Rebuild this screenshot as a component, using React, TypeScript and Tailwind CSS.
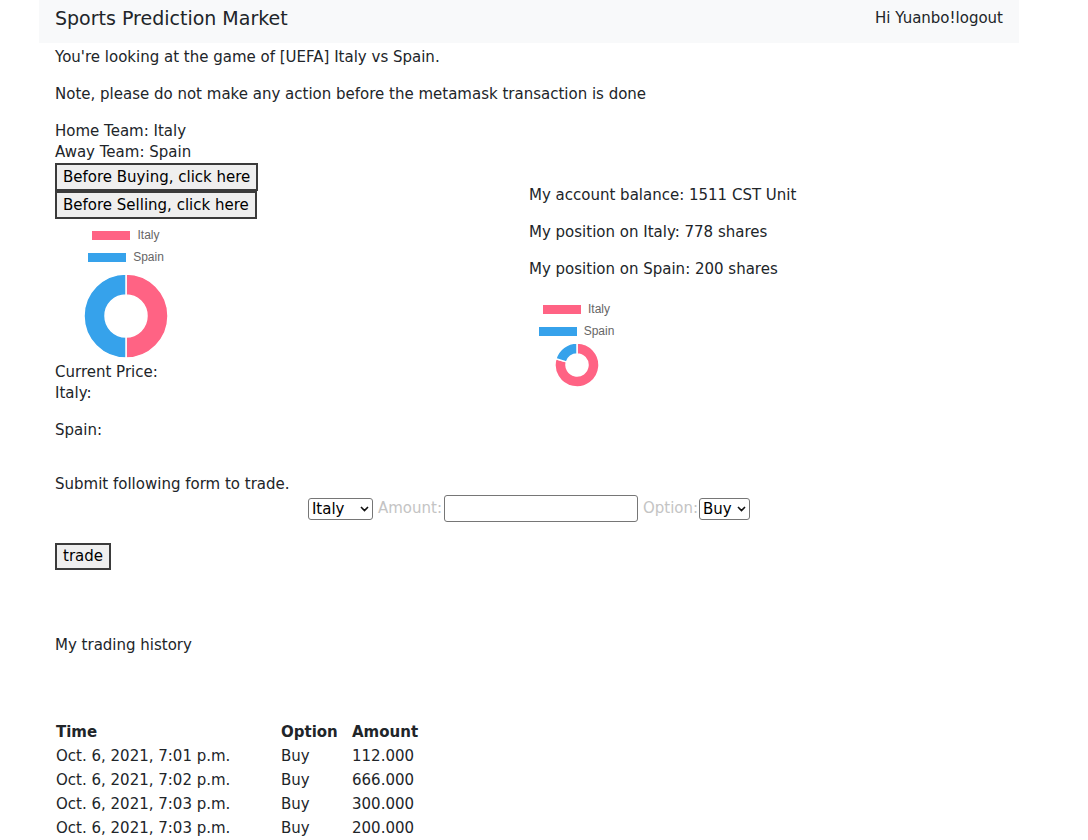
import React from 'react';

const PINK = '#ff6384';
const BLUE = '#36a2eb';

type Slice = { label: string; value: number; color: string };

function arcPath(cx: number, cy: number, R: number, r: number, a0: number, a1: number) {
    const large = a1 - a0 > Math.PI ? 1 : 0;
    const pt = (rad: number, a: number) => `${cx + rad * Math.cos(a)} ${cy + rad * Math.sin(a)}`;
    return `M ${pt(R, a0)} A ${R} ${R} 0 ${large} 1 ${pt(R, a1)} L ${pt(r, a1)} A ${r} ${r} 0 ${large} 0 ${pt(r, a0)} Z`;
}

const Donut: React.FC<{ slices: Slice[]; outer: number }> = ({ slices, outer }) => {
    const size = outer * 2 + 2;
    const c = size / 2;
    const total = slices.reduce((s, x) => s + x.value, 0);
    let start = -Math.PI / 2;
    return (
        <svg width={size} height={size} viewBox={`0 0 ${size} ${size}`}>
            {slices.map((s) => {
                const end = start + (s.value / total) * Math.PI * 2;
                const d = arcPath(c, c, outer, outer / 2, start, end);
                start = end;
                return <path key={s.label} d={d} fill={s.color} stroke="#fff" strokeWidth={1.5} />;
            })}
        </svg>
    );
};

const Legend: React.FC<{ slices: Slice[] }> = ({ slices }) => (
    <div className="flex flex-col items-center font-['Liberation_Sans',sans-serif] text-[12px] text-[#666]">
        {slices.map((s) => (
            <div key={s.label} className="flex h-[22px] items-center gap-[7px]">
                <span className="h-[9px] w-[38px]" style={{ backgroundColor: s.color }}></span>
                <span>{s.label}</span>
            </div>
        ))}
    </div>
);

const Chevron: React.FC = () => (
    <svg width="9" height="6" viewBox="0 0 9 6" className="pointer-events-none absolute right-[4px] top-1/2 -translate-y-1/2">
        <path d="M1 1 L4.5 4.5 L8 1" fill="none" stroke="#111" strokeWidth="1.6" />
    </svg>
);

const Select: React.FC<{ value: string; options: string[]; width: string }> = ({ value, options, width }) => (
    <div className={`relative h-[22px] ${width}`}>
        <select
            defaultValue={value}
            className="h-full w-full appearance-none rounded-[3px] border border-[#767676] bg-white pl-[3px] text-[15px] leading-[20px] text-black"
        >
            {options.map((o) => (
                <option key={o}>{o}</option>
            ))}
        </select>
        <Chevron />
    </div>
);

const history = [
    { time: 'Oct. 6, 2021, 7:01 p.m.', option: 'Buy', amount: '112.000' },
    { time: 'Oct. 6, 2021, 7:02 p.m.', option: 'Buy', amount: '666.000' },
    { time: 'Oct. 6, 2021, 7:03 p.m.', option: 'Buy', amount: '300.000' },
    { time: 'Oct. 6, 2021, 7:03 p.m.', option: 'Buy', amount: '200.000' },
];

const App: React.FC = () => {
    const price: Slice[] = [
        { label: 'Italy', value: 1, color: PINK },
        { label: 'Spain', value: 1, color: BLUE },
    ];
    const position: Slice[] = [
        { label: 'Italy', value: 778, color: PINK },
        { label: 'Spain', value: 200, color: BLUE },
    ];

    return (
        <div className="min-h-screen bg-white font-['DejaVu_Sans',sans-serif] text-[15px] leading-[21px] text-[#212529]">
            <div className="ml-[39px] w-[980px]">
                <nav className="flex h-[43px] items-start justify-between bg-[#f8f9fa] px-4 pt-[3px] leading-[30px]">
                    <span className="text-[19px]">Sports Prediction Market</span>
                    <span>Hi Yuanbo!logout</span>
                </nav>

                <div className="px-4 pt-[4px]">
                    <p className="mb-4">You're looking at the game of [UEFA] Italy vs Spain.</p>
                    <p className="mb-4">Note, please do not make any action before the metamask transaction is done</p>

                    <div className="flex items-start">
                        <div className="w-[474px]">
                            <div>Home Team: Italy</div>
                            <div>Away Team: Spain</div>
                            <div className="flex flex-col items-start">
                                <button className="h-[28px] border-2 border-[#3b3b3b] bg-[#efefef] px-[6px] leading-[21px] text-black">
                                    Before Buying, click here
                                </button>
                                <button className="h-[28px] border-2 border-[#3b3b3b] bg-[#efefef] px-[6px] leading-[21px] text-black">
                                    Before Selling, click here
                                </button>
                            </div>
                            <div className="flex w-[142px] flex-col items-center pt-[5px]">
                                <Legend slices={price} />
                                <div className="mt-[5px] mb-[3px]">
                                    <Donut slices={price} outer={42} />
                                </div>
                            </div>
                            <div>Current Price:</div>
                            <p className="mb-4">Italy:</p>
                            <p className="mb-4">Spain:</p>
                        </div>

                        <div className="pt-[64px]">
                            <p className="mb-4">My account balance: 1511 CST Unit</p>
                            <p className="mb-4">My position on Italy: 778 shares</p>
                            <p className="mb-4">My position on Spain: 200 shares</p>
                            <div className="flex w-[95px] flex-col items-center pt-[2px]">
                                <Legend slices={position} />
                                <Donut slices={position} outer={22} />
                            </div>
                        </div>
                    </div>

                    <p className="mt-[17px]">Submit following form to trade.</p>
                    <form className="flex h-[27px] items-center justify-center" onSubmit={(e) => e.preventDefault()}>
                        <Select value="Italy" options={['Italy', 'Spain']} width="w-[65px]" />
                        <label className="ml-[5px] text-[#c4c4c4]">Amount:</label>
                        <input className="ml-[2px] h-[27px] w-[194px] rounded-[3px] border border-[#767676] bg-white" />
                        <label className="ml-[5px] text-[#c4c4c4]">Option:</label>
                        <div className="ml-[1px]">
                            <Select value="Buy" options={['Buy', 'Sell']} width="w-[51px]" />
                        </div>
                    </form>
                    <button className="mt-[21px] h-[27px] border-2 border-[#3b3b3b] bg-[#efefef] px-[6px] leading-[21px] text-black">
                        trade
                    </button>

                    <p className="mt-[65px]">My trading history</p>

                    <table className="mt-[64px] border-collapse">
                        <thead>
                            <tr className="h-[24px] text-left font-bold">
                                <th className="w-[225px] pl-[1px]">Time</th>
                                <th className="w-[71px] pl-[1px]">Option</th>
                                <th className="pl-[1px]">Amount</th>
                            </tr>
                        </thead>
                        <tbody>
                            {history.map((h, i) => (
                                <tr key={i} className="h-[24px]">
                                    <td className="pl-[1px]">{h.time}</td>
                                    <td className="pl-[1px]">{h.option}</td>
                                    <td className="pl-[1px]">{h.amount}</td>
                                </tr>
                            ))}
                        </tbody>
                    </table>
                </div>
            </div>
        </div>
    );
};

export default App;
